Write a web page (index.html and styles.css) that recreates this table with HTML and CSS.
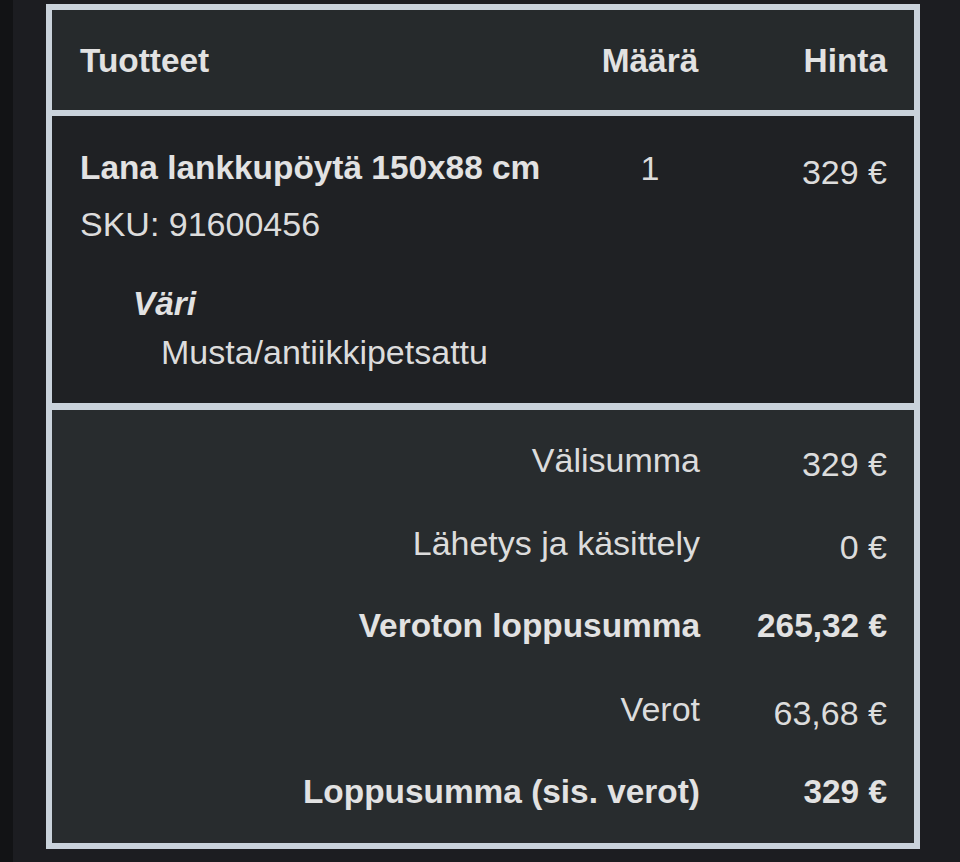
FILE: index.html
```html
<!DOCTYPE html>
<html lang="fi">
<head>
    <meta charset="UTF-8">
    <meta name="viewport" content="width=device-width, initial-scale=1.0">
    <title>Tilaus</title>
    <link rel="stylesheet" href="styles.css">
</head>
<body>
    <div class="order">
        <div class="row order-head">
            <div>Tuotteet</div>
            <div class="qty">Määrä</div>
            <div class="price">Hinta</div>
        </div>

        <div class="row order-item">
            <div class="product">
                <div class="product-name">Lana lankkupöytä 150x88 cm</div>
                <div class="sku">SKU: 91600456</div>
                <dl class="options">
                    <dt>Väri</dt>
                    <dd>Musta/antiikkipetsattu</dd>
                </dl>
            </div>
            <div class="qty">1</div>
            <div class="price">329 €</div>
        </div>

        <div class="totals">
            <div class="row total">
                <div class="label">Välisumma</div>
                <div class="price">329 €</div>
            </div>
            <div class="row total">
                <div class="label">Lähetys ja käsittely</div>
                <div class="price">0 €</div>
            </div>
            <div class="row total strong">
                <div class="label">Veroton loppusumma</div>
                <div class="price">265,32 €</div>
            </div>
            <div class="row total">
                <div class="label">Verot</div>
                <div class="price">63,68 €</div>
            </div>
            <div class="row total strong">
                <div class="label">Loppusumma (sis. verot)</div>
                <div class="price">329 €</div>
            </div>
        </div>
    </div>
    <p class="note">Ä</p>
</body>
</html>
```

FILE: styles.css
```css
* {
    margin: 0;
    padding: 0;
    box-sizing: border-box;
}
body {
    background: linear-gradient(to right, #121315 13px, #1c1d21 13px);
    color: #dcdcdc;
    font-family: "Liberation Sans", Arial, sans-serif;
    font-size: 34px;
    line-height: 48px;
    padding: 4px 40px 0 46px;
    height: 862px;
    overflow: hidden;
}
.order {
    border: 6px solid #c9d2db;
    background: #282c2e;
}
.row {
    display: grid;
    grid-template-columns: 1fr 100px 187px;
    padding: 0 27px 0 28px;
}
.qty {
    text-align: center;
}
.price {
    text-align: right;
    padding-top: 4px;
    margin-bottom: -4px;
}
.order-head {
    background: #262a2c;
    font-weight: bold;
    font-size: 33.4px;
    color: #e2e2e2;
    padding-top: 27px;
    padding-bottom: 25px;
    border-bottom: 6px solid #c9d2db;
}
.order-head .price {
    padding-top: 0;
    margin-bottom: 0;
}
.order-item {
    background: #1f2124;
    padding-top: 28px;
    padding-bottom: 27px;
    border-bottom: 7px solid #c9d2db;
}
.product-name {
    font-weight: bold;
    font-size: 33.4px;
    color: #e2e2e2;
}
.sku {
    margin-top: 8px;
}
.options {
    margin-top: 32px;
}
.options dt {
    margin-left: 53px;
    font-weight: bold;
    font-style: italic;
    font-size: 33.4px;
    color: #e2e2e2;
}
.options dd {
    margin-left: 81px;
}
.totals {
    padding: 9px 0;
}
.total {
    padding-top: 17px;
    padding-bottom: 18px;
}
.total .label {
    grid-column: 1 / 3;
    text-align: right;
}
.total.strong {
    font-weight: bold;
    font-size: 33.4px;
    color: #e2e2e2;
}
.total.strong .price {
    padding-top: 0;
    margin-bottom: 0;
}
.note {
    margin-top: 6px;
    padding-left: 4px;
}
```
